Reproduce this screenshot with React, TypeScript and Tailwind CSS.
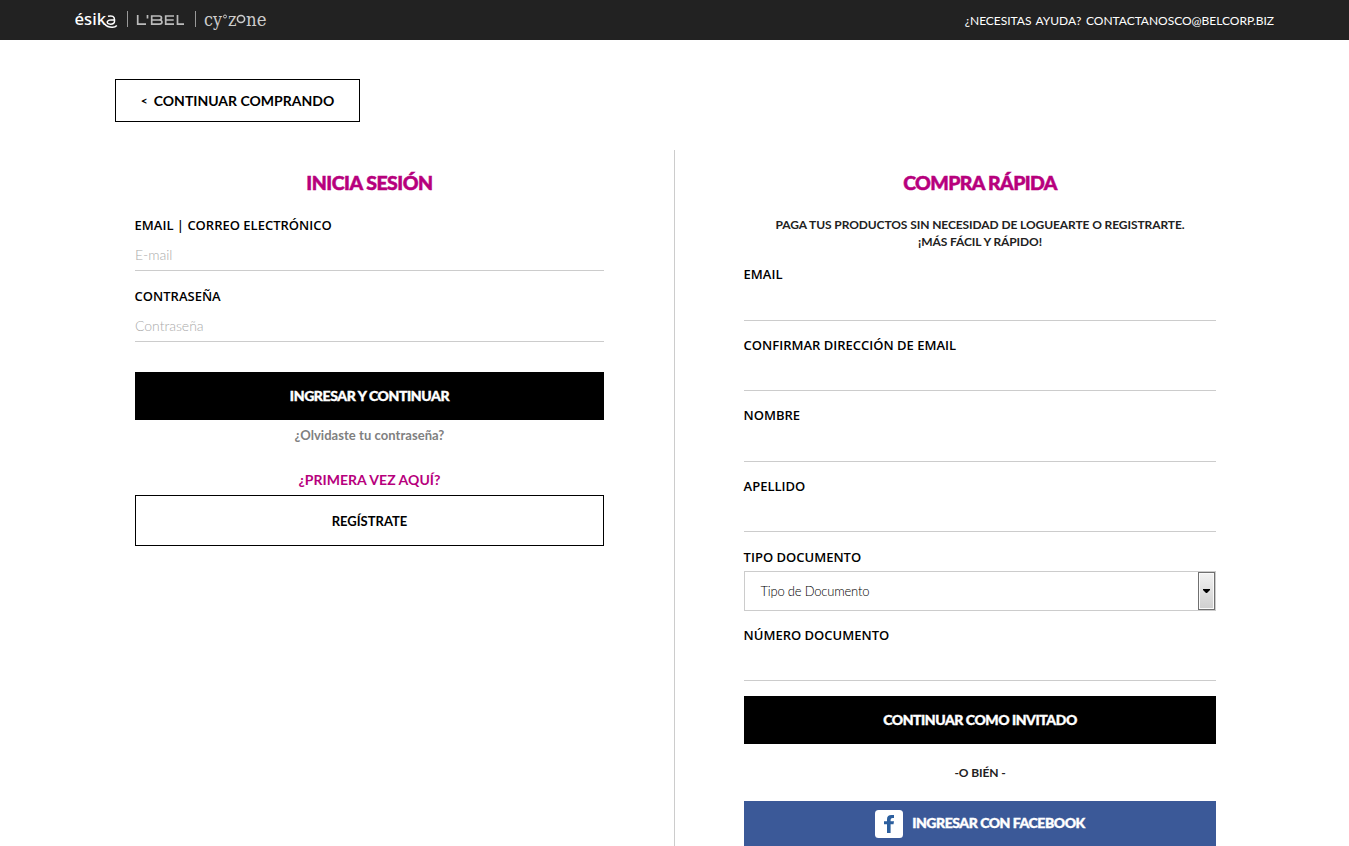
import React from "react";

const LATO = "font-['Lato',sans-serif]";

function Field({ label, placeholder = "", className = "", type = "text" }: { label: string; placeholder?: string; className?: string; type?: string }) {
  return (
    <label className={`flex flex-col border-b border-[#ccc] ${className}`}>
      <span className="-ml-[0.4px] h-[18px] text-[13px] leading-[18px] font-semibold whitespace-nowrap font-['Open_Sans',sans-serif]">{label}</span>
      <input
        type={type}
        placeholder={placeholder}
        className="mt-[5px] h-[30px] w-full bg-transparent text-[14px] font-light tracking-[-0.03px] text-[#333] outline-none placeholder:text-[#aaa]"
      />
    </label>
  );
}

function Logos() {
  return (
    <svg width="196" height="26" viewBox="0 0 196 26" className="block" aria-label="Marcas">
      <text x="-0.5" y="16.500" fontFamily="'Noto Sans', sans-serif" fontWeight="500" fontSize="16" fill="#fff" textLength="31.500" lengthAdjust="spacingAndGlyphs">ésik</text>
      <path d="M33 8.300q6.500-1.500 6.500 3.200v1.800q0 2.900-4 2.900-3.500-.1-3.200-2.500q.5-1.900 7.200-1.900M29.500 16q3 3.500 8 3.300 2.800-.2 4.300-1.900" fill="none" stroke="#fff" strokeWidth="1.500" />
      <path d="M52.500 3v16M120.500 3v16" stroke="#999" strokeWidth="1" />
      <g fill="none" stroke="#bbb" strokeWidth="1.700">
        <path d="M62.700 7v9.200H71M72.500 7v3.500M76.700 8h7.500q2.300 0 2.300 2T84.200 12h-7.500M84.200 12q2.800 0 2.800 2.100T84.200 16.200h-7.500V7.200M99 8h-8.300v8.200h8.300M90.700 12h8M102.500 7v9.200h6.500" />
      </g>
      <g fontFamily="'DejaVu Serif', serif" fontSize="18" fill="#ccc">
        <text x="129" y="17.500" textLength="18" lengthAdjust="spacingAndGlyphs">cy</text>
        <text x="153" y="17.500" textLength="8.500" lengthAdjust="spacingAndGlyphs">z</text>
        <text x="171" y="17.500" textLength="20.500" lengthAdjust="spacingAndGlyphs">ne</text>
      </g>
      <circle cx="150" cy="8.500" r="1.500" fill="none" stroke="#ccc" strokeWidth="1" />
      <ellipse cx="166" cy="11" rx="3.600" ry="3.500" fill="none" stroke="#ccc" strokeWidth="1.600" />
    </svg>
  );
}

export default function App() {
  return (
    <div className={`flex h-[846px] w-full flex-col overflow-hidden bg-white text-black ${LATO}`}>
      <header className="flex h-10 shrink-0 items-start justify-between bg-[#222] pr-[75px] pl-[75px]">
        <div className="pt-2">
          <Logos />
        </div>
        <div className="pt-[11px] text-[12px] leading-5 tracking-[-0.02px] whitespace-nowrap text-white [word-spacing:1.5px]">¿NECESITAS AYUDA? CONTACTANOSCO@BELCORP.BIZ</div>
      </header>

      <div className="pt-[39px] pl-[115px]">
        <button className="flex h-[43px] w-[245px] items-center justify-center gap-[6px] border border-black text-[14px] font-bold whitespace-nowrap">
          <span className="text-[12px]">&lt;</span>
          <span>CONTINUAR COMPRANDO</span>
        </button>
      </div>

      <main className="mt-7 flex min-h-0 flex-1 pl-[115px]">
        <section className="w-[560px] shrink-0 border-r border-[#ccc] pr-[70px] pl-5">
          <h2 className="mt-[21px] h-6 text-center font-['Lato_Black','Lato',sans-serif] text-[19.5px] leading-6 font-black tracking-[-0.5px] text-[#b7007d] [-webkit-text-stroke:0.5px]">INICIA SESIÓN</h2>
          <Field label="EMAIL | CORREO ELECTRÓNICO" placeholder="E-mail" className="mt-[21px] h-[55px]" />
          <Field label="CONTRASEÑA" placeholder="Contraseña" className="mt-4 h-[55px]" />
          <button className="mt-[30px] h-12 w-full bg-black pb-[2px] font-['Lato_Black','Lato',sans-serif] text-[14px] font-black tracking-[-0.4px] text-white [-webkit-text-stroke:0.4px]">INGRESAR Y CONTINUAR</button>
          <p className="mt-[5px] text-center text-[13px] leading-5 font-bold tracking-[0.05px] text-[#808080]">¿Olvidaste tu contraseña?</p>
          <p className="mt-[25px] text-center text-[14px] leading-5 font-bold tracking-[0.03px] text-[#b7007d]">¿PRIMERA VEZ AQUÍ?</p>
          <button className="mt-[5px] h-[51px] w-full border border-black pt-[2px] text-[13px] font-bold">REGÍSTRATE</button>
        </section>

        <section className="ml-[69px] w-[472px] shrink-0">
          <h2 className="mt-[21px] h-6 text-center font-['Lato_Black','Lato',sans-serif] text-[19.5px] leading-6 font-black tracking-[-0.65px] text-[#b7007d] [-webkit-text-stroke:0.5px]">COMPRA RÁPIDA</h2>
          <p className="mt-[21px] text-center text-[12px] leading-[17px] font-bold tracking-[-0.09px] whitespace-nowrap text-[#222]">
            PAGA TUS PRODUCTOS SIN NECESIDAD DE LOGUEARTE O REGISTRARTE.
            <br />
            ¡MÁS FÁCIL Y RÁPIDO!
          </p>
          <Field label="EMAIL" className="mt-[15px] h-14" />
          <Field label="CONFIRMAR DIRECCIÓN DE EMAIL" className="mt-[15px] h-[55px]" />
          <Field label="NOMBRE" className="mt-[15px] h-14" />
          <Field label="APELLIDO" className="mt-[15px] h-[55px]" />
          <div className="mt-4 -ml-[0.4px] h-[18px] text-[13px] leading-[18px] font-semibold font-['Open_Sans',sans-serif]">TIPO DOCUMENTO</div>
          <div className="mt-[5px] flex h-10 justify-between border border-[#ccc] pl-[15.5px]">
            <span className="self-center pt-[2px] text-[13px] font-light tracking-[-0.2px] text-black">Tipo de Documento</span>
            <span className="flex w-[17px] items-center justify-center border border-[#707070] bg-linear-to-b from-[#f2f2f2] to-[#cfcfcf] shadow-[inset_0_0_0_1px_#fafafa]">
              <svg width="7" height="4" viewBox="0 0 7 4"><path d="M0 0h7v1L4 4H3L0 1z" fill="#000" /></svg>
            </span>
          </div>
          <Field label="NÚMERO DOCUMENTO" className="mt-[15px] h-[55px]" />
          <button className="mt-[15px] h-12 w-full bg-black pb-[2px] font-['Lato_Black','Lato',sans-serif] text-[14px] font-black tracking-[-0.45px] text-white [-webkit-text-stroke:0.4px]">CONTINUAR COMO INVITADO</button>
          <p className="mt-[19px] text-center text-[12px] leading-5 font-bold tracking-[-0.1px] text-[#222]">-O BIÉN -</p>
          <button className="mt-[18px] flex h-[45px] w-full items-center justify-center gap-[9px] bg-[#3b5998] font-['Lato_Black','Lato',sans-serif] text-[14px] font-black tracking-[-0.45px] text-white">
            <svg width="28" height="28" viewBox="0 0 28 28">
              <rect width="28" height="28" rx="3.500" fill="#fff" />
              <path d="M12 23v-8.700H9v-3.100h3V9.200q0-4.200 4.500-4.200H19v3.100h-1.500q-1.900 0-1.900 1.700v1.400H19l-.5 3.100h-2.900V23z" fill="#2c5f9e" />
            </svg>
            <span className="pb-[2px] [-webkit-text-stroke:0.4px]">INGRESAR CON FACEBOOK</span>
          </button>
        </section>
      </main>
    </div>
  );
}
